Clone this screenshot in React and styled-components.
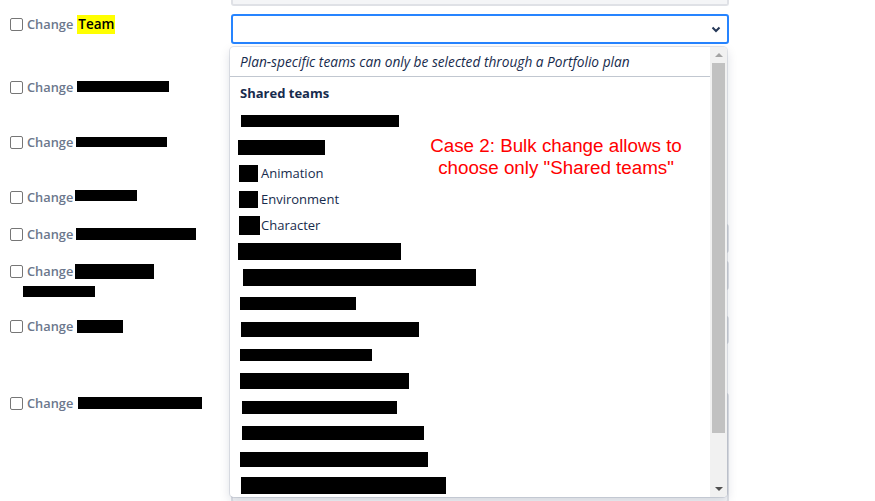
import React from "react";
import styled, { createGlobalStyle } from "styled-components";

const GlobalStyle = createGlobalStyle`
  body {
    margin: 0;
    background: #fff;
    font-family: "Open Sans", "Noto Sans", sans-serif;
    color: #172b4d;
  }
`;

// Layout
const Page = styled.div`
  width: 875px;
  height: 501px;
  overflow: hidden;
  display: flex;
  flex-direction: column;
`;

const FormRow = styled.div`
  display: grid;
  grid-template-columns: 231px 498px;
  height: ${(p) => p.h}px;
  flex-shrink: 0;
`;

const LabelCell = styled.div`
  padding-left: 10px;
`;

const Label = styled.label`
  display: flex;
  align-items: center;
  height: 20px;
  font-size: 12.8px;
  font-weight: 600;
  color: #6b778c;
`;

const Box = styled.input.attrs({ type: "checkbox" })`
  appearance: none;
  width: 13px;
  height: 13px;
  margin: 0 4px 0 0;
  border: 1px solid #767676;
  border-radius: 2px;
  background: #fff;
  box-sizing: border-box;
`;

const Highlight = styled.span`
  margin-left: 4px;
  padding: 0 1px;
  background: #ffff00;
  color: #000;
  font-size: 13.5px;
  font-weight: 600;
  line-height: 19px;
`;

const Redact = styled.span`
  display: inline-block;
  flex-shrink: 0;
  width: ${(p) => p.w}px;
  height: ${(p) => p.h}px;
  margin-left: ${(p) => p.ml || 0}px;
  margin-top: ${(p) => p.dy || 0}px;
  background: #000;
`;

const WrapLine = styled.div`
  display: flex;
  align-items: center;
  height: 20px;
  padding-left: 13px;
`;

// Fields
const PrevField = styled.div`
  height: 6px;
  box-sizing: border-box;
  background: #f4f5f7;
  border: 2px solid #dfe1e6;
  border-top: none;
  border-radius: 0 0 3px 3px;
`;

const Field = styled.div`
  height: ${(p) => p.h}px;
  box-sizing: border-box;
  background: #f4f5f7;
  border: 2px solid #dfe1e6;
  border-radius: 3px;
`;

const SelectWrap = styled.div`
  position: relative;
`;

const Select = styled.div`
  height: 30px;
  box-sizing: border-box;
  border: 2px solid #2684ff;
  border-radius: 3px;
  background: #fff;
  display: flex;
  align-items: center;
  justify-content: flex-end;
  padding-right: 6px;
`;

// Dropdown menu
const Menu = styled.div`
  position: absolute;
  top: 33px;
  left: -1px;
  width: 497px;
  height: 450px;
  display: flex;
  background: #fff;
  border-radius: 4px;
  box-shadow: 0 0 0 1px rgba(9, 30, 66, 0.1), 0 4px 11px rgba(9, 30, 66, 0.15);
  overflow: hidden;
  z-index: 5;
`;

const MenuBody = styled.div`
  flex: 1;
  overflow: hidden;
`;

const MenuHeader = styled.div`
  height: 30px;
  box-sizing: border-box;
  padding-left: 10px;
  display: flex;
  align-items: center;
  border-bottom: 1px solid #c1c7d0;
  font-size: 13.7px;
  font-style: italic;
  color: #172b4d;
  white-space: nowrap;
`;

const GroupTitle = styled.div`
  height: 31px;
  box-sizing: border-box;
  padding: 6px 0 0 10px;
  font-size: 13px;
  font-weight: 700;
  line-height: 20px;
  color: #172b4d;
`;

const Item = styled.div`
  height: 26px;
  display: flex;
  align-items: center;
  padding-left: ${(p) => p.pl}px;
  font-size: 13px;
  color: #172b4d;
`;

const ItemText = styled.span`
  margin-left: ${(p) => p.gap}px;
`;

const Scrollbar = styled.div`
  width: 17px;
  display: flex;
  flex-direction: column;
  background: #f1f1f1;
`;

const Arrow = styled.div`
  height: 16px;
  display: flex;
  align-items: center;
  justify-content: center;
  flex-shrink: 0;
  &::before {
    content: "";
    border-left: 4px solid transparent;
    border-right: 4px solid transparent;
    ${(p) =>
      p.down
        ? "border-top: 4px solid #505050;"
        : "border-bottom: 4px solid #a3a3a3;"}
  }
`;

const Thumb = styled.div`
  height: 370px;
  margin: 0 2px;
  background: #c1c1c1;
`;

const Spacer = styled.div`
  flex: 1;
`;

const Note = styled.div`
  position: absolute;
  top: 88px;
  left: 176px;
  width: 300px;
  text-align: center;
  font-family: "Liberation Sans", Arial, sans-serif;
  font-size: 18.8px;
  line-height: 22px;
  color: #ff0000;
  pointer-events: none;
`;

const Chevron = () => (
  <svg width="10" height="7" viewBox="0 0 10 7">
    <path d="M1.5 1.5 L5 5 L8.5 1.5" fill="none" stroke="#253858" strokeWidth="2" />
  </svg>
);

const items = [
  { pl: 11, w: 158, h: 12 },
  { pl: 8, w: 87, h: 15 },
  { pl: 9, w: 19, h: 17, text: "Animation", gap: 3 },
  { pl: 9, w: 19, h: 17, text: "Environment", gap: 3 },
  { pl: 9, w: 21, h: 19, text: "Character", gap: 1 },
  { pl: 8, w: 163, h: 17 },
  { pl: 13, w: 233, h: 17 },
  { pl: 10, w: 116, h: 13 },
  { pl: 11, w: 178, h: 15 },
  { pl: 10, w: 132, h: 12 },
  { pl: 10, w: 169, h: 16 },
  { pl: 12, w: 155, h: 13 },
  { pl: 12, w: 182, h: 14 },
  { pl: 10, w: 188, h: 15 },
  { pl: 11, w: 205, h: 17 },
];

const ChangeLabel = ({ children }) => (
  <Label>
    <Box />
    Change
    {children}
  </Label>
);

export default function App() {
  return (
    <Page>
      <GlobalStyle />

      <FormRow h={14}>
        <div />
        <div>
          <PrevField />
        </div>
      </FormRow>

      <FormRow h={63}>
        <LabelCell>
          <ChangeLabel>
            <Highlight>Team</Highlight>
          </ChangeLabel>
        </LabelCell>
        <SelectWrap>
          <Select>
            <Chevron />
          </Select>
          <Menu>
            <MenuBody>
              <MenuHeader>Plan-specific teams can only be selected through a Portfolio plan</MenuHeader>
              <GroupTitle>Shared teams</GroupTitle>
              {items.map((it, i) => (
                <Item key={i} pl={it.pl}>
                  <Redact w={it.w} h={it.h} />
                  {it.text && <ItemText gap={it.gap}>{it.text}</ItemText>}
                </Item>
              ))}
            </MenuBody>
            <Scrollbar>
              <Arrow />
              <Thumb />
              <Spacer />
              <Arrow down />
            </Scrollbar>
            <Note>
              Case 2: Bulk change allows to
              <br />
              choose only "Shared teams"
            </Note>
          </Menu>
        </SelectWrap>
      </FormRow>

      <FormRow h={55}>
        <LabelCell>
          <ChangeLabel>
            <Redact w={92} h={11} ml={4} dy={-1} />
          </ChangeLabel>
        </LabelCell>
        <div />
      </FormRow>

      <FormRow h={55}>
        <LabelCell>
          <ChangeLabel>
            <Redact w={91} h={10} ml={3} dy={0} />
          </ChangeLabel>
        </LabelCell>
        <div />
      </FormRow>

      <FormRow h={37}>
        <LabelCell>
          <ChangeLabel>
            <Redact w={62} h={11} ml={2} dy={-3} />
          </ChangeLabel>
        </LabelCell>
        <div />
      </FormRow>

      <FormRow h={37}>
        <LabelCell>
          <ChangeLabel>
            <Redact w={120} h={12} ml={3} />
          </ChangeLabel>
        </LabelCell>
        <Field h={29} />
      </FormRow>

      <FormRow h={55}>
        <LabelCell>
          <ChangeLabel>
            <Redact w={79} h={15} ml={2} />
          </ChangeLabel>
          <WrapLine>
            <Redact w={72} h={11} />
          </WrapLine>
        </LabelCell>
        <Field h={29} />
      </FormRow>

      <FormRow h={77}>
        <LabelCell>
          <ChangeLabel>
            <Redact w={46} h={13} ml={4} />
          </ChangeLabel>
        </LabelCell>
        <Field h={28} />
      </FormRow>

      <FormRow h={110}>
        <LabelCell>
          <ChangeLabel>
            <Redact w={124} h={12} ml={5} />
          </ChangeLabel>
        </LabelCell>
        <Field h={110} />
      </FormRow>
    </Page>
  );
}
